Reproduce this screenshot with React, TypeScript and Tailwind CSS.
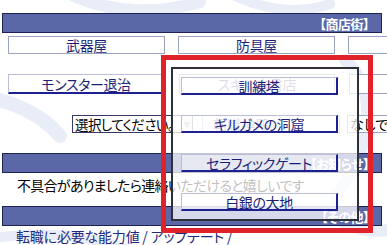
const font = "font-['Noto_Sans_CJK_JP','Noto_Sans',sans-serif] [font-feature-settings:'palt']";

function SectionBar({ title }: { title: string }) {
  return (
    <div className="mx-[2px] mr-[5px] h-[20px] bg-[#5a68a8] border border-[#1e2252] flex items-center justify-end pr-[12px]">
      <span className="text-white font-bold text-[13px] leading-none tracking-[-0.5px]">{title}</span>
    </div>
  );
}

function MenuButton({ label, active, popup, className = "" }: { label: string; active?: boolean; popup?: boolean; className?: string }) {
  return (
    <div
      className={
        "flex items-center justify-center text-[#1c1f78] text-[14px] leading-none tracking-[-0.4px] border " +
        (popup ? "bg-white/40 " : "bg-white ") +
        (active
          ? "border-[#b9bdd8] border-b-2 border-r-2 border-b-[#1c2090] border-r-[#1c2090] "
          : "border-[#9ca2c2] ") +
        className
      }
    >
      {label}
    </div>
  );
}

function Watermark() {
  return (
    <svg className="absolute inset-0" width="387" height="245" viewBox="0 0 387 245">
      <g fill="none" stroke="#e8edf7" strokeLinecap="round">
        <path d="M70 -6 C110 14 160 14 200 2" strokeWidth="12" />
        <path d="M235 -4 C270 12 300 14 330 4" strokeWidth="10" />
        <path d="M-10 98 C20 104 45 118 60 136" strokeWidth="14" />
        <path d="M-5 238 C40 230 90 236 130 250" strokeWidth="10" />
        <path d="M345 60 C380 90 370 150 340 190 C320 215 350 235 390 230" strokeWidth="12" />
      </g>
    </svg>
  );
}

export default function App() {
  return (
    <div className={"relative w-[387px] h-[245px] overflow-hidden bg-white " + font}>
      <Watermark />

      <div className="relative pt-[13px]">
        <SectionBar title="【商店街】" />

        <div className="flex mt-[3px] pl-[8px] gap-[13px]">
          <MenuButton label="武器屋" className="w-[157px] h-[18px] shrink-0" />
          <MenuButton label="防具屋" className="w-[157px] h-[18px] shrink-0" />
          <MenuButton label="" className="w-[157px] h-[18px] shrink-0" />
        </div>

        <div className="flex mt-[20px] pl-[8px] gap-[14px]">
          <MenuButton label="モンスター退治" active className="w-[157px] h-[20px] shrink-0" />
          <MenuButton label="スキル古書店" className="w-[156px] h-[20px] shrink-0" />
          <MenuButton label="" className="w-[157px] h-[20px] shrink-0" />
        </div>

        <div className="flex items-center mt-[21px] h-[18px]">
          <div className="ml-[72px] w-[121px] h-[18px] flex border border-[#3a3a6a] bg-white shrink-0">
            <span className="flex-1 text-[13.5px] leading-[16px] tracking-[-0.6px] text-black pl-[2px] whitespace-nowrap">選択してください。</span>
            <span className="w-[11px] border-l border-[#c8c8d0] bg-[#f2f2f4] flex items-center justify-center text-[7px] text-[#999]">▼</span>
          </div>
          <div className="ml-[9px] w-[138px] h-[18px] border border-[#9ca2c2] bg-white flex items-center pl-[10px] text-[14px] text-[#1c1f78] shrink-0">転職神殿</div>
          <div className="ml-[7px] w-[60px] h-[18px] border border-[#9ca2c2] bg-white flex items-center pl-[2px] text-[14px] text-black shrink-0 whitespace-nowrap">なしで</div>
        </div>

        <div className="mt-[20px]">
          <SectionBar title="【お知らせ】" />
        </div>
        <p className="mt-[2px] pl-[17px] text-[14px] leading-[20px] tracking-[-0.7px] text-black whitespace-nowrap">不具合がありましたら連絡いただけると嬉しいです</p>

        <div className="mt-[11px]">
          <SectionBar title="【その他】" />
        </div>
        <p className="pl-[16px] text-[14px] leading-[20px] tracking-[-0.2px] text-[#1c2a80] whitespace-nowrap">転職に必要な能力値 / アップデート /</p>
      </div>

      {/* popup */}
      <div className="absolute left-[171px] top-[67px] w-[188px] h-[154px] border-2 border-[#2e3038] bg-white/75 flex flex-col pl-[8px] pt-[8px] gap-[20px]">
        <MenuButton label="訓練塔" active popup className="w-[157px] h-[18px]" />
        <MenuButton label="ギルガメの洞窟" active popup className="w-[157px] h-[18px]" />
        <MenuButton label="セラフィックゲート" active popup className="w-[157px] h-[18px] mt-[1px]" />
        <MenuButton label="白銀の大地" active popup className="w-[157px] h-[18px] mt-[1px]" />
      </div>
      <div className="absolute left-[161px] top-[55px] w-[212px] h-[178px] border-[5px] border-[#e0222b]" />
    </div>
  );
}
